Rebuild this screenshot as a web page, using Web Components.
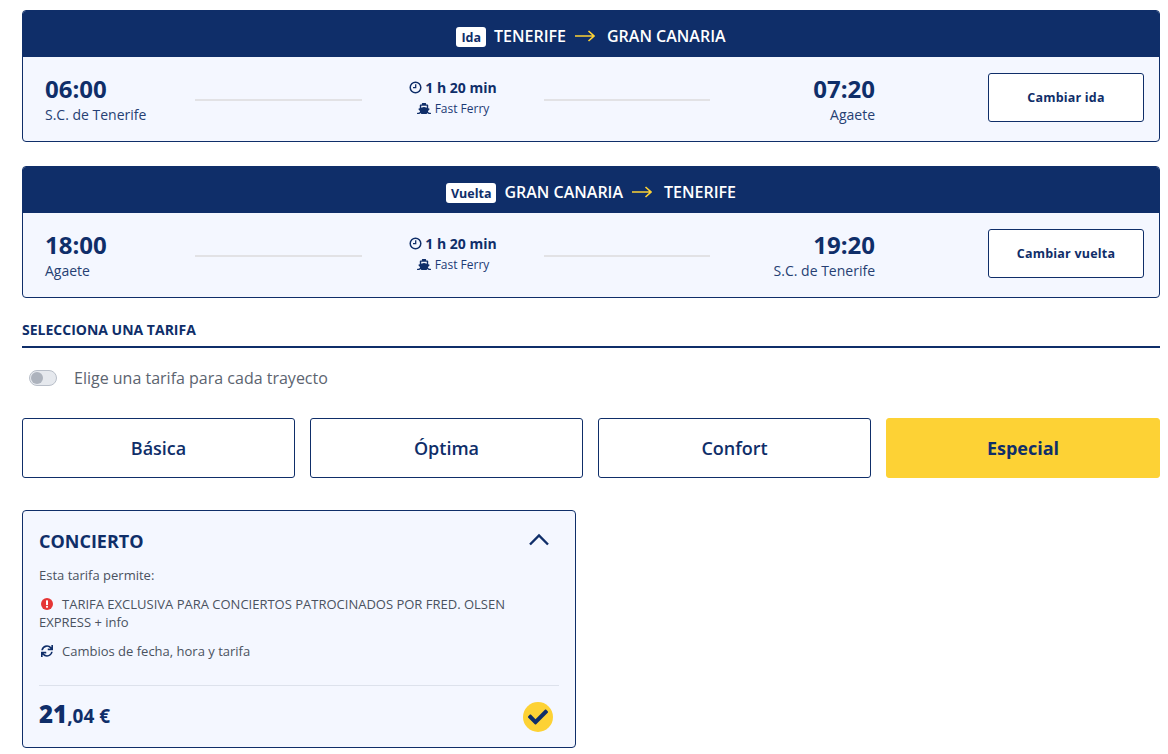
<!DOCTYPE html>
<html lang="es"><head><meta charset="utf-8"><title>Tarifas</title>
<style>
html,body{margin:0;padding:0;background:#fff}
body{font-family:"Open Sans","Noto Sans",sans-serif;color:#0f2e69;height:754px;overflow:hidden}
app-page{display:flex}
</style></head><body>
<app-page>
  <trip-card badge="Ida" from="TENERIFE" to="GRAN CANARIA" dep="06:00" dep-place="S.C. de Tenerife" arr="07:20" arr-place="Agaete" action="Cambiar ida"></trip-card>
  <trip-card badge="Vuelta" from="GRAN CANARIA" to="TENERIFE" dep="18:00" dep-place="Agaete" arr="19:20" arr-place="S.C. de Tenerife" action="Cambiar vuelta"></trip-card>
  <section-title>SELECCIONA UNA TARIFA</section-title>
  <fare-toggle>Elige una tarifa para cada trayecto</fare-toggle>
  <fare-tabs></fare-tabs>
  <fare-card></fare-card>
</app-page>
<script>
const el=(name,cls)=>{customElements.define(name,cls)};
const shadow=(h,html)=>{h.attachShadow({mode:'open'}).innerHTML=html};

el('app-page',class extends HTMLElement{constructor(){super();shadow(this,`<style>
:host{display:flex;flex-direction:column;width:1138px;margin-left:22px;padding-top:10px}
</style><slot></slot>`)}});

el('trip-card',class extends HTMLElement{connectedCallback(){const a=n=>this.getAttribute(n);shadow(this,`<style>
:host{display:block;height:132px;margin-bottom:24px;box-sizing:border-box;border:1px solid #0f2e69;border-radius:4px;background:#f4f7ff;overflow:hidden}
.head{height:47px;box-sizing:border-box;padding-top:4px;background:#0f2e69;color:#fff;display:flex;align-items:center;justify-content:center;font-size:16px;font-weight:600;margin:-1px -1px 0}
.badge{background:#fff;color:#0f2e69;font-size:12.5px;font-weight:700;border-radius:3px;height:20px;line-height:21px;padding:0 5px;margin-right:8px;margin-top:2px}
.arrow{margin:0 12px 0 9px;display:block}
.body{display:flex;align-items:center;height:84px;padding:0 15px 0 22px}
.end{width:150px;flex:none}
.end.right{text-align:right;width:164px}
.time{font-size:24px;font-weight:700;line-height:30px}
.place{font-size:14px;line-height:20px;color:#263f73;margin-top:1px}
.line{height:2px;background:#e2e2e5;flex:none;margin-top:2px}
.line.l{width:167px}
.line.r{width:166px;margin-right:1px}
.mid{width:182px;flex:none;text-align:center;margin-top:-3px}
.dur{font-size:14px;font-weight:700;line-height:20px;display:flex;justify-content:center;align-items:center;gap:3px}
.svc{font-size:12px;line-height:18px;display:flex;justify-content:center;align-items:center;gap:4px;margin-top:2px;color:#1c3a75}
.btn{flex:none;margin-left:113px;margin-top:-4px;width:156px;height:49px;box-sizing:border-box;border:1px solid #0f2e69;border-radius:3px;background:#fff;display:flex;align-items:center;justify-content:center;font-size:12.5px;font-weight:700;letter-spacing:.2px}
svg{display:block}
</style>
<div class="head"><span class="badge">${a('badge')}</span><span>${a('from')}</span>
<svg class="arrow" width="20" height="12" viewBox="0 0 20 12" fill="none" stroke="#fdd235" stroke-width="1.6"><path d="M0 6H18.5M13.5 1l5.5 5-5.5 5"/></svg>
<span>${a('to')}</span></div>
<div class="body">
<div class="end"><div class="time">${a('dep')}</div><div class="place">${a('dep-place')}</div></div>
<div class="line l"></div>
<div class="mid"><div class="dur"><svg width="13" height="13" viewBox="0 0 13 13" fill="none" stroke="#0f2e69"><circle cx="6.500" cy="6.500" r="5.300" stroke-width="1.500"/><path d="M6.700 3.200v3.500H4" stroke-width="1.300"/></svg><span>1 h 20 min</span></div>
<div class="svc"><svg width="14" height="11.200" viewBox="0 0 640 512" fill="#0f2e69"><path d="M496.616 372.639l70.012-70.012c16.899-16.9 9.942-45.771-12.836-53.092L512 236.102V96c0-17.673-14.327-32-32-32h-64V24c0-13.255-10.745-24-24-24H248c-13.255 0-24 10.745-24 24v40h-64c-17.673 0-32 14.327-32 32v140.102l-41.792 13.433c-22.753 7.313-29.754 36.173-12.836 53.092l70.012 70.012C125.828 416.287 85.587 448 24 448c-13.255 0-24 10.745-24 24v16c0 13.255 10.745 24 24 24 61.023 0 107.499-20.61 143.258-59.396C181.677 487.432 216.021 512 256 512h128c39.979 0 74.323-24.568 88.742-59.396C508.495 491.384 554.968 512 616 512c13.255 0 24-10.745 24-24v-16c0-13.255-10.745-24-24-24-61.512 0-101.787-31.67-119.384-75.361zM192 128h256v87.531l-118.208-37.995a31.995 31.995 0 0 0-19.584 0L192 215.531V128z"/></svg><span>Fast Ferry</span></div></div>
<div class="line r"></div>
<div class="end right"><div class="time">${a('arr')}</div><div class="place">${a('arr-place')}</div></div>
<div class="btn">${a('action')}</div>
</div>`)}});

el('section-title',class extends HTMLElement{constructor(){super();shadow(this,`<style>
:host{display:block;font-size:14px;font-weight:700;line-height:18px;padding:0 0 7px;border-bottom:2px solid #0f2e69;margin-top:-1px;height:18px}
</style><slot></slot>`)}});

el('fare-toggle',class extends HTMLElement{constructor(){super();shadow(this,`<style>
:host{display:flex;align-items:center;height:24px;margin-top:18px;padding-left:7px;font-size:16px;color:#5c6470}
.sw{width:28px;height:16px;box-sizing:border-box;border:1px solid #b9bfc9;border-radius:8px;background:#e6e9ee;margin-right:17px;padding:1px;flex:none}
.knob{width:12px;height:12px;border-radius:50%;background:#adb3bd}
</style><span class="sw"><div class="knob"></div></span><slot></slot>`)}});

el('fare-tabs',class extends HTMLElement{constructor(){super();shadow(this,`<style>
:host{display:grid;grid-template-columns:273px 273px 273px 274px;column-gap:15px;margin-top:28px}
div{height:60px;box-sizing:border-box;border:1px solid #0f2e69;border-radius:3px;background:#fff;display:flex;align-items:center;justify-content:center;font-size:18px;font-weight:600}
.on{background:#fdd235;border-color:#fdd235;color:#0f2e69;font-weight:700}
</style><div>Básica</div><div>Óptima</div><div>Confort</div><div class="on">Especial</div>`)}});

el('fare-card',class extends HTMLElement{constructor(){super();shadow(this,`<style>
:host{display:block;width:554px;height:238px;box-sizing:border-box;margin-top:32px;border:1px solid #0f2e69;border-radius:4px;background:#f4f7ff;padding:0 16px;color:#4a5260;font-size:13px}
.top{display:flex;justify-content:space-between;align-items:center;height:57px;color:#0f2e69}
h2{margin:2px 0 0;font-size:18px;font-weight:700;line-height:24px}
.top svg{margin-right:9px;margin-top:-1px}
p{margin:0;line-height:18px}
.intro{margin-top:-2px}
.row{position:relative;margin-top:11px;text-indent:23px;width:490px}
.row svg{position:absolute;left:2px;top:3px}
.foot{margin-top:25px;border-top:1px solid #dde2ec;display:flex;justify-content:space-between;align-items:center;height:61px;color:#0f2e69}
.price{font-size:19px;font-weight:700;line-height:30px;margin-top:-4px}
.price b{font-size:24px}
.ok{width:30px;height:30px;border-radius:50%;background:#fdd235;display:flex;align-items:center;justify-content:center;margin:0 6px 0 0}
</style>
<div class="top"><h2>CONCIERTO</h2><svg width="22" height="13" viewBox="0 0 22 13" fill="none" stroke="#0f2e69" stroke-width="2.400"><path d="M2 11.500 11 2.500l9 9"/></svg></div>
<p class="intro">Esta tarifa permite:</p>
<p class="row"><svg width="12" height="12" viewBox="0 0 12 12"><circle cx="6" cy="6" r="6" fill="#e53535"/><rect x="5" y="2.300" width="2" height="4.700" rx=".6" fill="#fff"/><circle cx="6" cy="8.800" r="1.100" fill="#fff"/></svg>TARIFA EXCLUSIVA PARA CONCIERTOS PATROCINADOS POR FRED. OLSEN EXPRESS + info</p>
<p class="row"><svg width="12" height="12" viewBox="0 0 512 512" fill="#0f2e69"><path d="M440.65 12.57l4 82.77A247.16 247.16 0 0 0 255.83 8C134.73 8 33.91 94.92 12.29 209.82A12 12 0 0 0 24.09 224h49.05a12 12 0 0 0 11.67-9.26 175.91 175.91 0 0 1 317-56.94l-101.46-4.86a12 12 0 0 0-12.57 12v47.41a12 12 0 0 0 12 12H500a12 12 0 0 0 12-12V12a12 12 0 0 0-12-12h-47.37a12 12 0 0 0-11.98 12.57zM255.83 432a175.61 175.61 0 0 1-146-77.8l101.8 4.87a12 12 0 0 0 12.57-12v-47.4a12 12 0 0 0-12-12H12a12 12 0 0 0-12 12V500a12 12 0 0 0 12 12h47.35a12 12 0 0 0 12-12.6l-4.15-82.57A247.17 247.17 0 0 0 255.83 504c121.11 0 221.93-86.92 243.55-201.82a12 12 0 0 0-11.8-14.18h-49.05a12 12 0 0 0-11.67 9.26A175.86 175.86 0 0 1 255.83 432z"/></svg>Cambios de fecha, hora y tarifa</p>
<div class="foot"><div class="price"><b>21</b>,04 €</div><div class="ok"><svg width="20" height="20" viewBox="0 0 512 512" fill="#0f2e69"><path d="M173.898 439.404l-166.4-166.4c-9.997-9.997-9.997-26.206 0-36.204l36.203-36.204c9.997-9.998 26.207-9.998 36.204 0L192 312.69 432.095 72.596c9.997-9.997 26.207-9.997 36.204 0l36.203 36.204c9.997 9.997 9.997 26.206 0 36.204l-294.4 294.401c-9.998 9.997-26.207 9.997-36.204-.001z"/></svg></div></div>`)}});
</script>
</body></html>
